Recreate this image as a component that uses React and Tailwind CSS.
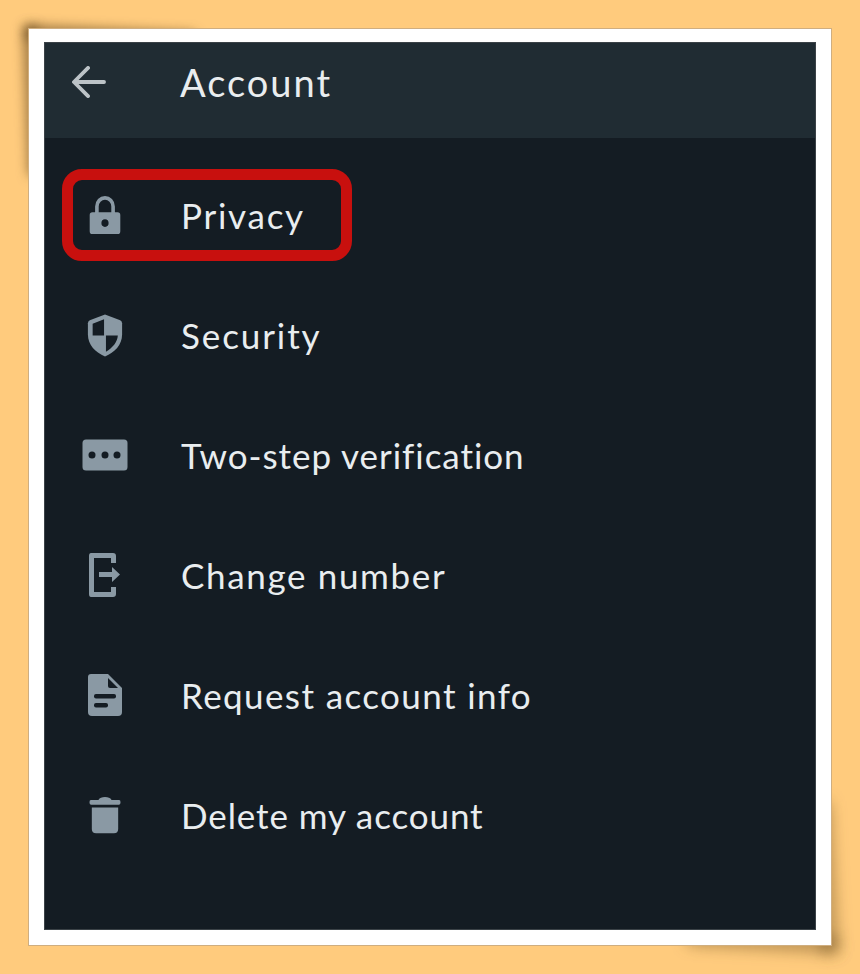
import React from "react";

const gray = "#8a99a4";

const Lock = () => (
  <svg width="36" height="42" viewBox="0 0 40 44" fill={gray} preserveAspectRatio="none">
    <path fillRule="evenodd" d="M9 19v-6a11 11 0 0 1 22 0v6h3a3 3 0 0 1 3 3v17a3 3 0 0 1-3 3H6a3 3 0 0 1-3-3V22a3 3 0 0 1 3-3zm4 0h14v-6a7 7 0 0 0-14 0zm7 7.500a4 4 0 1 0 0 8 4 4 0 0 0 0-8z" />
  </svg>
);
const Shield = () => (
  <svg width="38" height="45" viewBox="0 0 40 46" fill={gray}>
    <path d="M20 1 L36 7 Q38 8 38 10 V22 C38 33 30 41 20 45 C10 41 2 33 2 22 V10 Q2 8 4 7 Z" />
    <path d="M19 6 L7 10.500 V23 H19 Z M21 23 V40 C28 36 33 30 33.500 23 Z" fill="#141c23" />
  </svg>
);
const Dots = () => (
  <svg width="46" height="32" viewBox="0 0 46 32" fill={gray}>
    <rect x="0.500" y="0.500" width="45" height="31" rx="3.500" />
    <circle cx="10" cy="16" r="3.500" fill="#141c23" />
    <circle cx="23" cy="16" r="3.500" fill="#141c23" />
    <circle cx="35" cy="16" r="3.500" fill="#141c23" />
  </svg>
);
const ChangeNum = () => (
  <svg width="34" height="46" viewBox="0 0 34 46" fill={gray}>
    <path d="M3 1H25Q28 1 28 4V11H23V6H6V40H23V35H28V42Q28 45 25 45H3Q1 45 1 42V4Q1 1 3 1Z" />
    <path d="M11 20H24V15L32 22.500 24 30V25H11Z" />
  </svg>
);
const Doc = () => (
  <svg width="36" height="44" viewBox="0 0 36 44" fill={gray}>
    <path d="M4 1H21L35 15V39Q35 43 31 43H5Q1 43 1 39V4Q1 1 4 1Z" />
    <path d="M21 5V13Q21 15 23 15H31Z" fill="#141c23" />
    <rect x="7" y="21" width="22" height="4.500" rx="2" fill="#141c23" />
    <rect x="7" y="30" width="14" height="4.500" rx="2" fill="#141c23" />
  </svg>
);
const Trash = () => (
  <svg width="32" height="38" viewBox="0 0 34 40" fill={gray}>
    <path d="M3 12H31V35Q31 39.500 26.500 39.500H7.500Q3 39.500 3 35Z" />
    <path d="M2 4H10Q12 1 17 1 22 1 24 4H32Q33.500 4 33.500 6.500 33.500 9 32 9H2Q0.500 9 0.500 6.500 0.500 4 2 4Z" />
  </svg>
);
const Back = () => (
  <svg width="34" height="32" viewBox="0 0 36 34" fill="none" stroke="#bcc3c7" strokeWidth="4" strokeLinecap="round" strokeLinejoin="round">
    <path d="M34 17H3M17 2 2 17 17 32" />
  </svg>
);

const rows = [
  { label: "Privacy", icon: <Lock />, boxed: true, track: "tracking-[1.75px]" },
  { label: "Security", icon: <Shield />, track: "tracking-[1.9px]" },
  { label: "Two-step verification", icon: <Dots />, track: "tracking-[0.95px]" },
  { label: "Change number", icon: <ChangeNum />, track: "tracking-[1.65px]" },
  { label: "Request account info", icon: <Doc />, track: "tracking-[1.4px]" },
  { label: "Delete my account", icon: <Trash />, track: "tracking-[0.9px]" },
];

export default function App() {
  return (
    <div className="w-[860px] h-[974px] bg-[#ffcb7d] pt-[28px] pl-[28px] overflow-hidden [font-family:Lato,'Noto_Sans',sans-serif]">
      <div className="relative isolate w-[804px] h-[918px]">
        <div className="absolute -z-10 left-[-2px] top-[-3px] w-[170px] h-[14px] bg-[#4a3210]/55 blur-[6px] origin-top-left rotate-[2.5deg]" />
        <div className="absolute -z-10 left-[-5px] top-[-2px] w-[14px] h-[150px] bg-[#4a3210]/55 blur-[6px] origin-top-left rotate-[-2deg]" />
        <div className="absolute -z-10 right-[-5px] bottom-[-6px] w-[14px] h-[150px] bg-[#4a3210]/45 blur-[8px] origin-bottom-right rotate-[-3deg]" />
        <div className="absolute -z-10 right-[-5px] bottom-[-6px] w-[150px] h-[14px] bg-[#4a3210]/45 blur-[8px] origin-bottom-right rotate-[3deg]" />
        <div className="w-full h-full bg-white pt-[13px] pl-[15px] border border-[#cfae80]">
          <div className="w-[772px] h-[888px] bg-[#141c23] border border-[#3b4247]">
            <header className="h-[95px] bg-[#202c33] flex items-center">
              <div className="w-[135px] pl-[27px] pb-[18px] flex">
                <Back />
              </div>
              <h1 className="text-[38px] leading-none font-normal text-[#e9edef] tracking-[2px] pb-[18px]">Account</h1>
            </header>
            <ul className="pt-[17px]">
              {rows.map((r) => (
                <li key={r.label} className="relative h-[120px] flex items-center">
                  <div className="w-[120px] flex items-center justify-center">
                    {r.icon}
                  </div>
                  <span className={`pl-[16px] text-[35px] leading-none text-[#e9edef] ${r.track}`}>{r.label}</span>
                  {r.boxed && (
                    <div className="absolute left-[17px] top-[14px] w-[290px] h-[92px] border-[11px] border-[#c8100e] rounded-[20px]" />
                  )}
                </li>
              ))}
            </ul>
          </div>
        </div>
      </div>
    </div>
  );
}
